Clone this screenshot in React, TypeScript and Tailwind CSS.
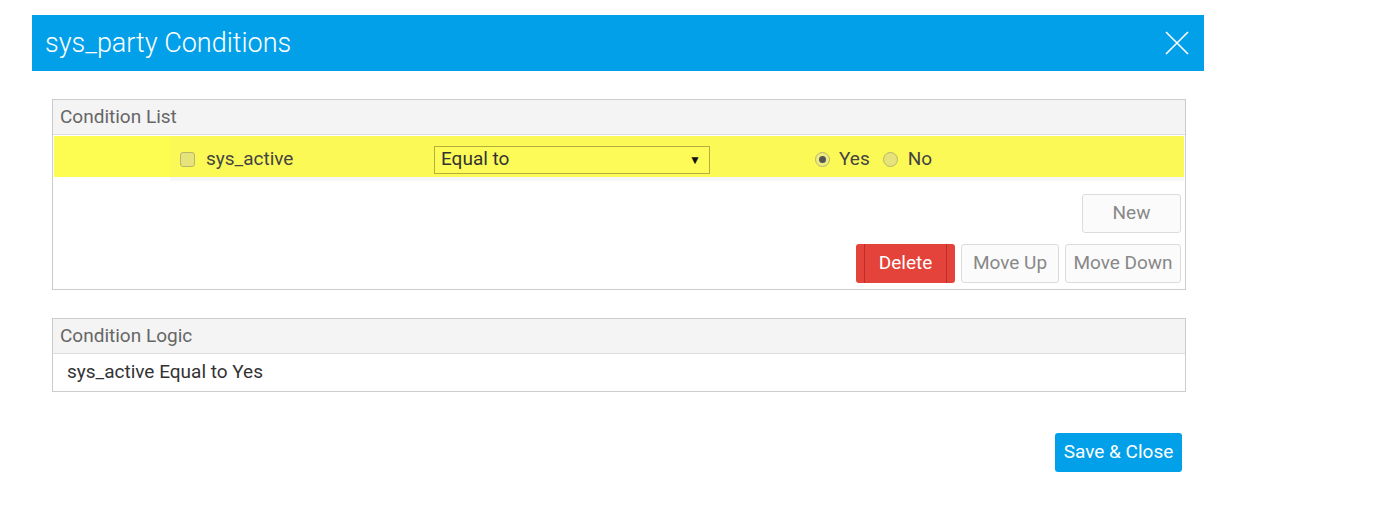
import React, { useState } from 'react';

const Btn: React.FC<{ label: string; className?: string }> = ({ label, className = '' }) => (
  <button
    className={`h-[39px] rounded-[3px] border border-[#dcdcdc] bg-[#fbfbfb] text-[19px] text-[#888] ${className}`}
  >
    {label}
  </button>
);

const App: React.FC = () => {
  const [value, setValue] = useState<'yes' | 'no'>('yes');

  return (
    <div className="h-[520px] w-[1394px] bg-white font-['Roboto',sans-serif]">
      <div className="pt-[15px] pl-[32px] w-[1204px]">
        <div className="flex h-[56px] items-center justify-between bg-[#03a0ea] pl-[13px] pr-[14px]">
          <h1 className="text-[27px] font-light text-white">sys_party Conditions</h1>
          <svg width="26" height="26" viewBox="0 0 26 26" className="text-white">
            <path d="M2 2 L24 24 M24 2 L2 24" stroke="currentColor" strokeWidth="1.6" />
          </svg>
        </div>

        <div className="ml-[20px] mr-[18px]">
          <div className="mt-[28px] border border-[#ccc]">
            <div className="flex h-[35px] items-center border-b border-[#ddd] bg-[#f4f4f4] px-[7px] text-[19px] text-[#666]">
              Condition List
            </div>
            <div className="p-[1px]">
              <div className="flex h-[41px] items-center bg-[#fbf956] pt-[6px]">
                <div className="-mt-[6px] h-[41px] w-[116px] bg-[#fdfc50]" />
                <label className="flex items-center pl-[10px] w-[264px] text-[19px] text-[#444]">
                  <span className="mr-[11px] h-[15px] w-[15px] rounded-[3px] border border-[#b9b66a] bg-[#e6e37a]" />
                  sys_active
                </label>
                <div className="flex h-[28px] w-[276px] items-center justify-between border border-[#b3ae3c] bg-[#fdfb58] pl-[6px] pr-[8px] text-[19px] text-[#333]">
                  <span>Equal to</span>
                  <span className="text-[12px] text-[#111]">▼</span>
                </div>
                <div className="ml-[105px] flex items-center text-[19px] text-[#444]">
                  <button onClick={() => setValue('yes')} className="flex items-center">
                    <span className="mr-[9px] flex h-[15px] w-[15px] items-center justify-center rounded-full border border-[#b9b66a] bg-[#eeeb80]">
                      {value === 'yes' && <span className="h-[7px] w-[7px] rounded-full bg-[#555]" />}
                    </span>
                    Yes
                  </button>
                  <button onClick={() => setValue('no')} className="ml-[13px] flex items-center">
                    <span className="mr-[10px] flex h-[15px] w-[15px] items-center justify-center rounded-full border border-[#b9b66a] bg-[#e6e37a]">
                      {value === 'no' && <span className="h-[7px] w-[7px] rounded-full bg-[#555]" />}
                    </span>
                    No
                  </button>
                </div>
              </div>
              <div className="ml-[116px] h-[4px] bg-[#f7f7f7]" />
            </div>
            <div className="flex flex-col items-end pr-[4px] pb-[6px] pt-[12px]">
              <Btn label="New" className="w-[99px]" />
              <div className="mt-[11px] flex gap-[6px]">
                <button className="relative h-[39px] w-[99px] rounded-[3px] bg-[#e3433a] text-[19px] text-white">
                  <span className="absolute left-[8px] top-0 h-full w-[1px] bg-[#b83028]" />
                  <span className="absolute right-[8px] top-0 h-full w-[1px] bg-[#b83028]" />
                  Delete
                </button>
                <Btn label="Move Up" className="w-[98px]" />
                <Btn label="Move Down" className="w-[116px]" />
              </div>
            </div>
          </div>

          <div className="mt-[28px] border border-[#ccc]">
            <div className="flex h-[35px] items-center border-b border-[#ddd] bg-[#f4f4f4] px-[7px] text-[19px] text-[#666]">
              Condition Logic
            </div>
            <div className="flex h-[37px] items-center px-[14px] text-[19px] text-[#333]">
              sys_active Equal to Yes
            </div>
          </div>

          <div className="mt-[41px] flex justify-end pr-[4px]">
            <button className="h-[39px] w-[127px] rounded-[3px] bg-[#03a0ea] text-[19px] text-white">
              Save &amp; Close
            </button>
          </div>
        </div>
      </div>
    </div>
  );
};

export default App;
